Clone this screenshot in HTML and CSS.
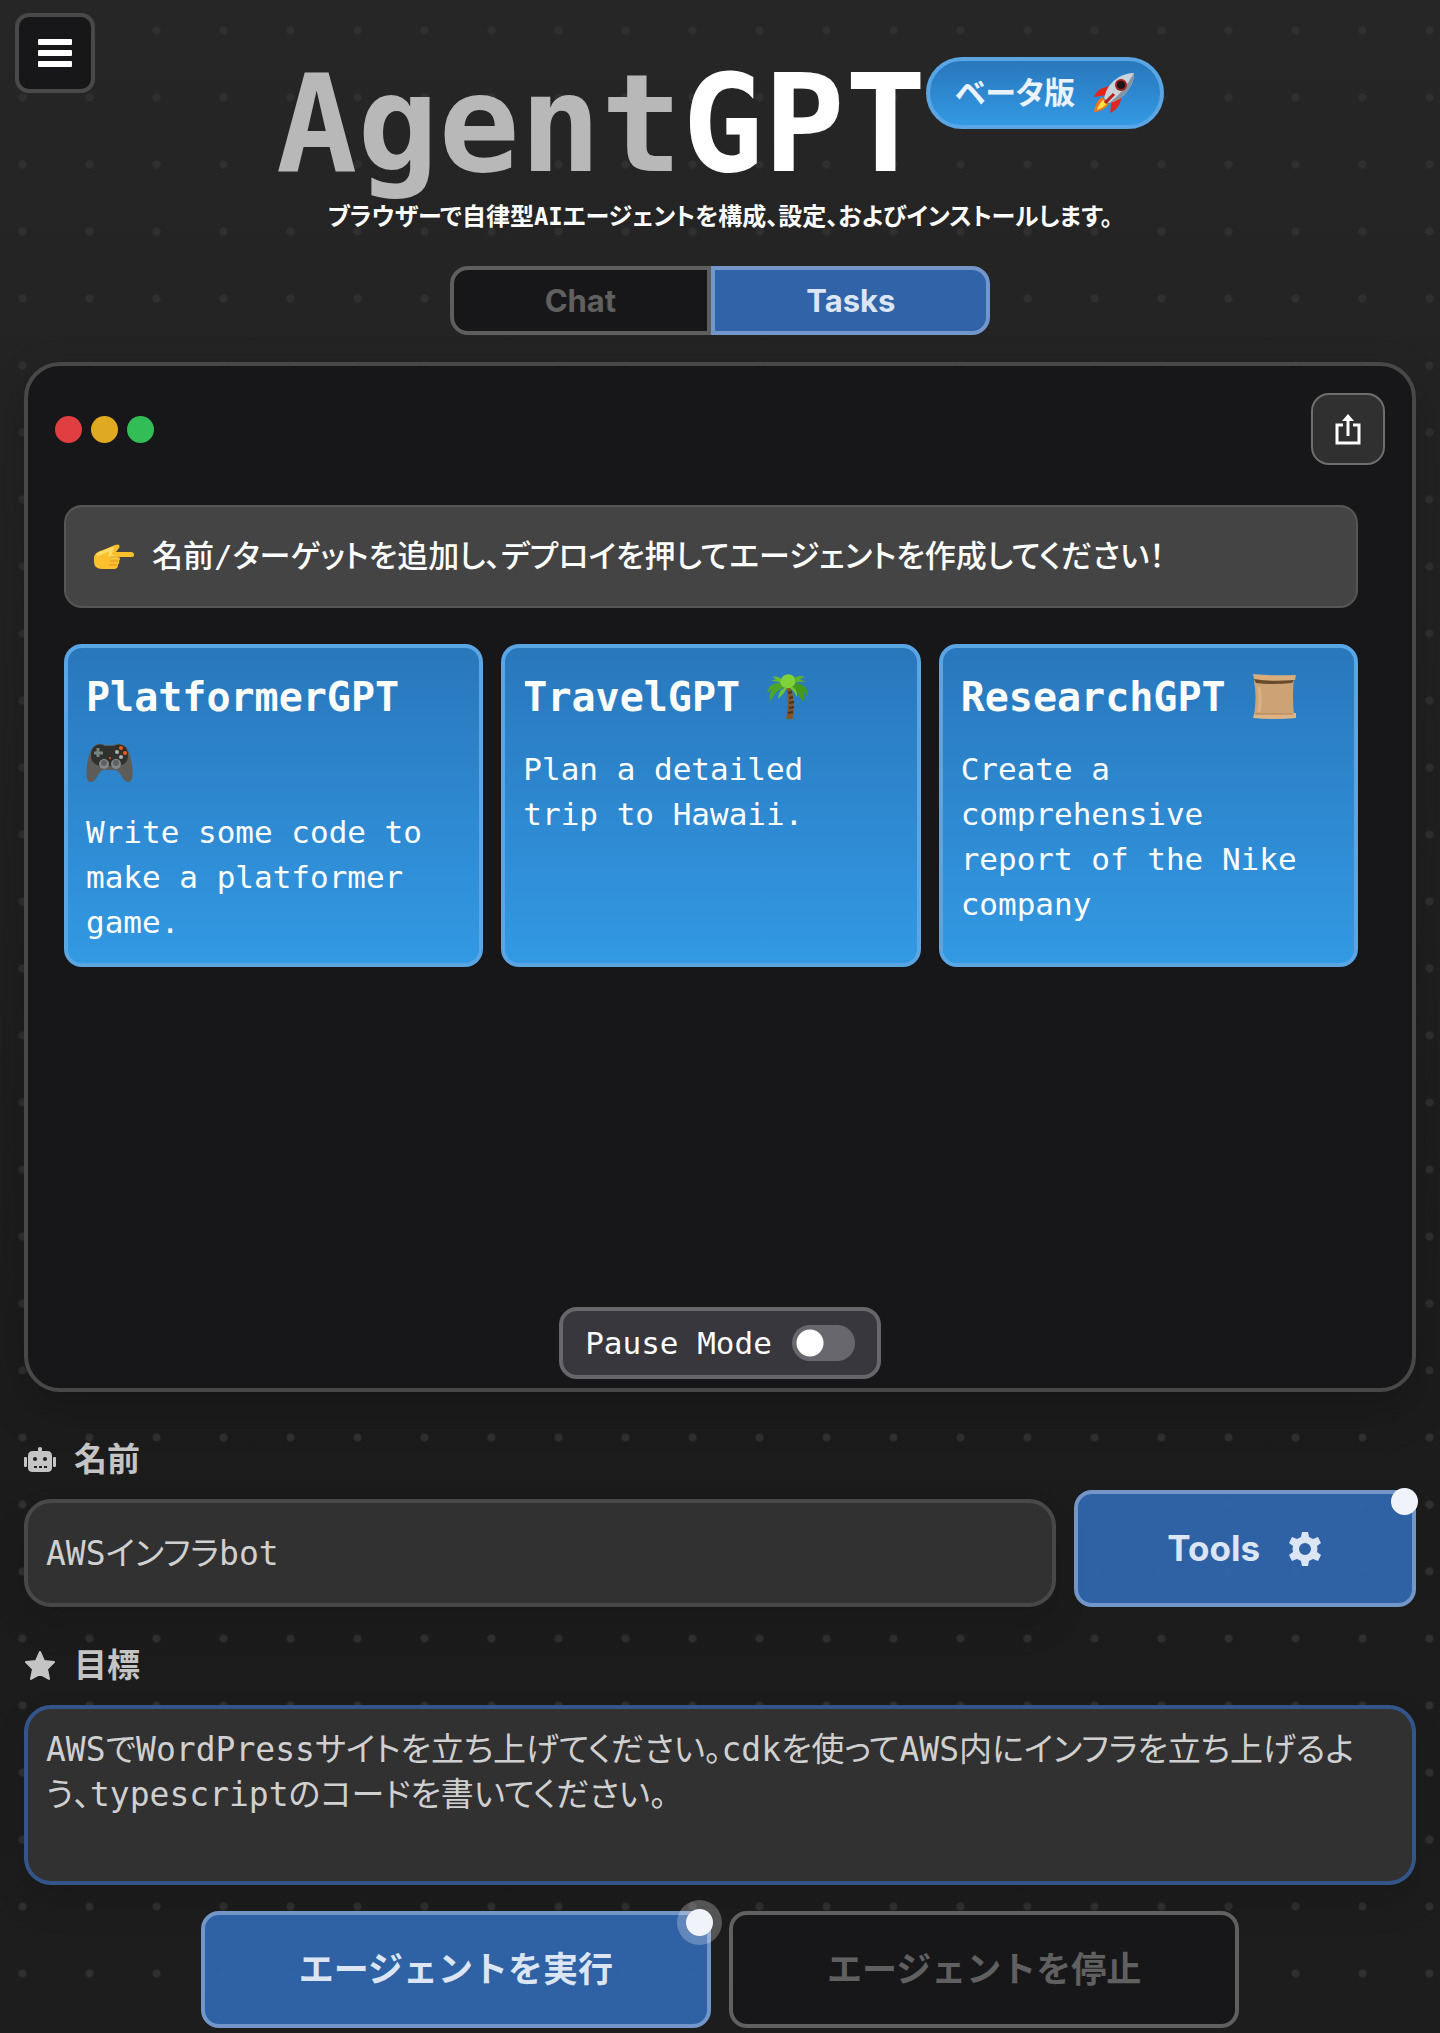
FILE: index.html
```html
<!DOCTYPE html>
<html lang="ja">
<head>
    <meta charset="UTF-8">
    <meta name="viewport" content="width=device-width, initial-scale=1.0">
    <title>AgentGPT</title>
    <link rel="stylesheet" href="styles.css">
</head>
<body>
    <button class="menu-button" type="button" aria-label="Menu">
        <svg width="34" height="30" viewBox="0 0 34 30" fill="#fff">
            <rect x="0" y="1" width="34" height="6" rx="1"/>
            <rect x="0" y="12" width="34" height="6" rx="1"/>
            <rect x="0" y="23" width="34" height="6" rx="1"/>
        </svg>
    </button>

    <header>
        <div class="title-row">
            <h1><span>Agent</span>GPT</h1>
            <div class="badge">
                ベータ版
                <svg width="42" height="42" viewBox="0 0 42 42">
                    <path d="M10 16 L19 13 L14 23 L1 25 Q4 18 10 16Z" fill="#e2261c"/>
                    <path d="M19 28 L29 22 L27 31 Q24 38 17 41Z" fill="#e2261c"/>
                    <path d="M9 25 Q2 30 1 40 Q11 39 16 32Z" fill="#f5761a"/>
                    <path d="M10 28 Q5 33 4 38 Q10 36 14 32Z" fill="#ffe14d"/>
                    <path d="M11 26 Q14 12 26 5 Q34 1 41 1 Q41 9 36 17 Q29 28 16 31Z" fill="#c9d3da"/>
                    <path d="M16 31 Q30 21 41 1 Q41 9 36 17 Q29 28 16 31Z" fill="#8494a0"/>
                    <circle cx="28" cy="13" r="6" fill="#a3211c"/>
                    <circle cx="28" cy="13" r="4" fill="#1e1416"/>
                    <path d="M12 31 L21 22" stroke="#b52019" stroke-width="3"/>
                </svg>
            </div>
        </div>
        <p class="subtitle">ブラウザーで自律型AIエージェントを構成、設定、およびインストールします。</p>
        <div class="tabs">
            <button class="tab" type="button">Chat</button>
            <button class="tab active" type="button">Tasks</button>
        </div>
    </header>

    <main>
        <section class="window">
            <div class="window-bar">
                <span class="light red"></span>
                <span class="light yellow"></span>
                <span class="light green"></span>
                <button class="share-button" type="button" aria-label="Share">
                    <svg width="26" height="32" viewBox="0 0 26 32" fill="none" stroke="#fff" stroke-width="3">
                        <path d="M8 12 H2 V30 H24 V12 H18"/>
                        <path d="M13 23 V4"/>
                        <path d="M7 8 L13 1 L19 8Z" fill="#fff" stroke="none"/>
                    </svg>
                </button>
            </div>

            <div class="messages">
                <div class="message">
                    <svg width="41" height="26" viewBox="0 0 41 26">
                        <path d="M1 13 Q2 8 10 6 L22 1 Q28 -1 26 4 L23 8 H38 Q41 8 41 11 Q41 13 38 13 H26 Q28 15 26 17 Q27 19 25 21 Q25 25 21 25 H9 Q1 25 1 18Z" fill="#fcc02e"/>
                        <path d="M4 11 Q10 8 19 5 L17 11 Q20 14 24 13" fill="none" stroke="#ffdc68" stroke-width="3"/>
                        <path d="M17 13 H26 M17 17 H25 M16 21 H24" stroke="#e09518" stroke-width="1"/>
                    </svg>
                    名前/ターゲットを追加し、デプロイを押してエージェントを作成してください！
                </div>

                <div class="cards">
                    <button class="card" type="button">
                        <span class="card-title">PlatformerGPT
                            <svg width="47" height="40" viewBox="0 0 47 40">
                                <path d="M8 3 Q14 -1 19 2 H28 Q33 -1 39 3 Q44 7 46 22 Q48 38 43 39 Q39 40 35 32 Q32 27 29 27 H18 Q15 27 12 32 Q8 40 4 39 Q-1 38 1 22 Q3 7 8 3Z" fill="#5d5c58"/>
                                <path d="M9 3 Q14 0 19 3 H28 Q33 0 38 3 Q42 6 42 13 Q42 20 34 23 H13 Q5 20 5 13 Q5 6 9 3Z" fill="#30302f"/>
                                <path d="M12 5 V14 M8 10 H17" stroke="#77847d" stroke-width="3"/>
                                <circle cx="18" cy="21" r="5" fill="#85898a"/>
                                <circle cx="30" cy="21" r="5" fill="#85898a"/>
                                <circle cx="18" cy="20" r="3" fill="#5e6263"/>
                                <circle cx="30" cy="20" r="3" fill="#5e6263"/>
                                <circle cx="35" cy="5" r="2" fill="#f25b12"/>
                                <circle cx="39" cy="10" r="2" fill="#f25b12"/>
                                <circle cx="31" cy="9" r="2" fill="#a9b3b0"/>
                                <circle cx="35" cy="14" r="2" fill="#a9b3b0"/>
                                <circle cx="24" cy="15" r="1" fill="#f25b12"/>
                            </svg>
                        </span>
                        <span class="card-text">Write some code to make a platformer game.</span>
                    </button>
                    <button class="card" type="button">
                        <span class="card-title">TravelGPT
                            <svg width="47" height="47" viewBox="0 0 47 47">
                                <path d="M22 13 L27 13 Q31 29 29 46 H22 Q26 29 22 13Z" fill="#80562c"/>
                                <path d="M24 20 L28 19 M25 25 L29 24 M25 30 L30 29 M25 35 L30 34 M24 40 L29 39" stroke="#4e3218" stroke-width="2"/>
                                <path d="M24 13 Q14 7 6 13 Q4 16 3 20 L8 16 Q5 21 6 28 L11 21 Q13 17 24 13Z" fill="#4fa528"/>
                                <path d="M24 13 Q35 7 41 14 Q45 18 43 23 L39 18 Q42 24 39 29 L35 23 Q33 17 24 13Z" fill="#439820"/>
                                <path d="M24 13 Q16 1 8 4 L12 6 L7 8 Q15 8 24 13Z" fill="#65ba31"/>
                                <path d="M24 13 Q30 0 41 4 L36 6 L42 9 Q32 8 24 13Z" fill="#5bb02c"/>
                                <path d="M24 14 Q15 15 14 26 L20 20 Q21 17 24 14 Q29 16 33 24 Q34 14 24 12Z" fill="#6dc532"/>
                                <path d="M16 9 Q19 -1 28 2 Q32 5 31 11 Q27 16 22 15 Q17 14 16 9Z" fill="#7fd239"/>
                            </svg>
                        </span>
                        <span class="card-text">Plan a detailed trip to Hawaii.</span>
                    </button>
                    <button class="card" type="button">
                        <span class="card-title">ResearchGPT
                            <svg width="47" height="47" viewBox="0 0 47 47">
                                <path d="M4 3 H44 Q42 24 44 42 H4 Q7 24 4 8Z" fill="#cda376"/>
                                <path d="M9 14 Q11 28 9 39" fill="none" stroke="#d8b287" stroke-width="3"/>
                                <path d="M3 1 Q22 3 46 2 L45 7 Q22 9 4 6Z" fill="#d8ad7c"/>
                                <path d="M4 6 Q22 9 44 7 L42 10 Q22 12 6 10Z" fill="#6a4a2d"/>
                                <path d="M4 41 L46 40 V45 Q25 47 3 45Z" fill="#dfb484"/>
                                <path d="M5 41 H43" stroke="#a87c51" stroke-width="1"/>
                            </svg>
                        </span>
                        <span class="card-text">Create a comprehensive report of the Nike company</span>
                    </button>
                </div>
            </div>

            <label class="pause">
                Pause Mode
                <input type="checkbox">
            </label>
        </section>

        <form>
            <div class="row">
                <div class="field">
                    <label for="name">
                        <svg width="32" height="26" viewBox="0 0 32 26">
                            <path d="M14 1 Q16 -1 18 1 V4 H23 Q28 4 28 9 V21 Q28 25 23 25 H9 Q4 25 4 21 V9 Q4 4 9 4 H14Z" fill="#c4c4c4"/>
                            <rect x="0" y="10" width="3" height="10" rx="1" fill="#c4c4c4"/>
                            <rect x="29" y="10" width="3" height="10" rx="1" fill="#c4c4c4"/>
                            <circle cx="11" cy="12" r="2" fill="#1e1e1e"/>
                            <circle cx="21" cy="12" r="2" fill="#1e1e1e"/>
                            <path d="M10 20 H13 M15 20 H18 M20 20 H23" stroke="#1e1e1e" stroke-width="2"/>
                        </svg>
                        名前
                    </label>
                    <input type="text" id="name" value="AWSインフラbot">
                </div>
                <button class="primary tools" type="button">
                    Tools
                    <svg width="36" height="36" viewBox="0 0 36 36">
                        <path fill="#dbe5f4" fill-rule="evenodd" d="M15 1 H21 L22 6 Q24 7 26 8 L31 6 L34 12 L30 15 Q31 18 30 21 L34 24 L31 30 L26 28 Q24 29 22 30 L21 35 H15 L14 30 Q12 29 10 28 L5 30 L2 24 L6 21 Q5 18 6 15 L2 12 L5 6 L10 8 Q12 7 14 6Z M18 12 A6 6 0 1 0 18 24 A6 6 0 1 0 18 12Z"/>
                    </svg>
                    <span class="ping"></span>
                </button>
            </div>

            <div class="field goal">
                <label for="goal">
                    <svg width="32" height="30" viewBox="0 0 32 30">
                        <path d="M16 1 L20 10 L30 11 L23 18 L25 28 L16 23 L7 28 L9 18 L2 11 L12 10Z" fill="#c4c4c4" stroke="#c4c4c4" stroke-width="2" stroke-linejoin="round"/>
                    </svg>
                    目標
                </label>
                <textarea id="goal">AWSでWordPressサイトを立ち上げてください。cdkを使ってAWS内にインフラを立ち上げるよう、typescriptのコードを書いてください。</textarea>
            </div>

            <div class="actions">
                <button class="primary" type="button">エージェントを実行<span class="ping ring"></span></button>
                <button class="stop" type="button" disabled>エージェントを停止</button>
            </div>
        </form>
    </main>
</body>
</html>
```

FILE: styles.css
```css
* {
    box-sizing: border-box;
}
body {
    margin: 0;
    padding: 57px 24px 5px;
    font-family: 'DejaVu Sans Mono', 'Noto Sans CJK JP', monospace;
    font-size: 31px;
    line-height: 45px;
    font-feature-settings: 'palt';
    color: #fff;
    /* dotted grid over a soft vertical gradient */
    background-color: #1d1d1d;
    background-image: radial-gradient(circle, #303030 3px, transparent 5px), linear-gradient(#262626, #1b1b1b 75%, #1d1d1d);
    background-size: 67px 67px, 100% 100%;
    background-position: -11px -3px, 0 0;
}
button, input, textarea {
    font: inherit;
    font-feature-settings: inherit;
    color: inherit;
    margin: 0;
}
button {
    cursor: pointer;
}

/* Header */
.menu-button {
    position: absolute;
    top: 13px;
    left: 15px;
    width: 80px;
    height: 80px;
    padding: 0;
    display: flex;
    align-items: center;
    justify-content: center;
    background-color: #171719;
    border: 4px solid #494949;
    border-radius: 14px;
}
header {
    display: flex;
    flex-direction: column;
    align-items: center;
}
.title-row {
    display: flex;
    align-items: flex-start;
}
h1 {
    margin: 0;
    font-size: 135px;
    line-height: 136px;
    font-weight: bold;
}
h1 span {
    color: #b8b8b8;
}
.badge {
    display: flex;
    align-items: center;
    gap: 18px;
    height: 72px;
    padding: 0 25px;
    font-weight: bold;
    color: #eaf3fd;
    background: linear-gradient(#2977bc, #3299e3);
    border: 4px solid #5aa5e4;
    border-radius: 36px;
}
.subtitle {
    margin: 2px 0 26px;
    font-size: 24px;
    font-weight: bold;
}
.tabs {
    display: flex;
    font-family: Inter, 'Noto Sans CJK JP', sans-serif;
    font-weight: bold;
}
.tab {
    height: 69px;
    padding: 0 91px;
    font-weight: bold;
    color: #606060;
    background-color: #171719;
    border: 4px solid #5e5e5e;
    border-radius: 18px 0 0 18px;
}
.tab.active {
    color: #dbe5f4;
    background-color: #3063a8;
    border-color: #7396cb;
    border-radius: 0 18px 18px 0;
}

/* Window */
.window {
    display: flex;
    flex-direction: column;
    min-height: 1030px;
    margin-top: 27px;
    padding: 27px 27px 9px;
    background-color: #171719;
    border: 4px solid #484848;
    border-radius: 36px;
    box-shadow: 0 18px 45px rgba(0, 0, 0, 0.2);
}
.window-bar {
    display: flex;
    align-items: center;
    gap: 9px;
}
.light {
    width: 27px;
    height: 27px;
    border-radius: 50%;
}
.red {
    background-color: #e03e40;
}
.yellow {
    background-color: #e0a922;
}
.green {
    background-color: #32bd56;
}
.share-button {
    display: flex;
    align-items: center;
    justify-content: center;
    width: 74px;
    height: 72px;
    margin-left: auto;
    padding: 0;
    background-color: #303030;
    border: 2px solid #6e6e6e;
    border-radius: 18px;
}
.messages {
    padding: 40px 27px 0 9px;
}
.message {
    display: flex;
    align-items: center;
    gap: 18px;
    min-height: 103px;
    padding: 0 27px;
    font-weight: 500;
    background-color: #444445;
    border: 2px solid #565657;
    border-radius: 18px;
}
.cards {
    display: grid;
    grid-template-columns: repeat(3, 1fr);
    gap: 18px;
    margin-top: 36px;
}
.card {
    display: flex;
    flex-direction: column;
    gap: 18px;
    padding: 18px 24px 18px 18px;
    text-align: left;
    background: linear-gradient(#2977bc, #3299e3);
    border: 4px solid #5aa5e4;
    border-radius: 18px;
}
.card-title {
    font-size: 40px;
    line-height: 63px;
    font-weight: bold;
}
.card-title svg {
    display: inline-block;
    vertical-align: text-bottom;
}
.pause {
    display: flex;
    align-items: center;
    gap: 20px;
    align-self: center;
    height: 72px;
    margin-top: auto;
    padding: 0 22px;
    background-color: #38373d;
    border: 4px solid #67666b;
    border-radius: 18px;
}
.pause input {
    appearance: none;
    width: 63px;
    height: 36px;
    border-radius: 18px;
    background: radial-gradient(circle at 18px 18px, #fff 13px, #68676e 14px);
}

/* Form */
form {
    margin-top: 45px;
}
.row {
    display: flex;
    align-items: flex-end;
    gap: 18px;
}
.field {
    display: flex;
    flex-direction: column;
    gap: 17px;
    flex: 1;
}
.field label {
    display: flex;
    align-items: center;
    gap: 18px;
    font-size: 33px;
    font-weight: bold;
    color: #c4c4c4;
}
.field input, .field textarea {
    width: 100%;
    height: 108px;
    padding: 14px 18px 18px;
    font-size: 33px;
    color: #d0d0d0;
    background-color: #313131;
    border: 4px solid #484848;
    border-radius: 27px;
    box-shadow: 0 18px 36px rgba(0, 0, 0, 0.1);
}
.field textarea {
    display: block;
    height: 180px;
    padding: 18px 40px 18px 18px;
    border-color: #33568a;
    resize: none;
}
.goal {
    margin-top: 36px;
}
.primary, .stop {
    position: relative;
    display: flex;
    align-items: center;
    justify-content: center;
    gap: 27px;
    height: 117px;
    padding: 0 94px;
    font-family: Inter, 'Noto Sans CJK JP', sans-serif;
    font-size: 35px;
    font-weight: bold;
    font-feature-settings: normal;
    border: 4px solid #7396c8;
    border-radius: 18px;
}
.primary {
    color: #dbe5f4;
    background-color: rgba(48, 102, 175, 0.93);
}
.tools {
    padding: 0 89px;
}
.stop {
    color: #606060;
    background-color: #171719;
    border-color: #606060;
}
.ping {
    position: absolute;
    top: -6px;
    right: -6px;
    width: 27px;
    height: 27px;
    border-radius: 50%;
    background-color: #f0f3fa;
}
.ring {
    box-shadow: 0 0 0 9px rgba(255, 255, 255, 0.25);
}
.actions {
    display: flex;
    justify-content: center;
    gap: 18px;
    margin-top: 26px;
}
```
